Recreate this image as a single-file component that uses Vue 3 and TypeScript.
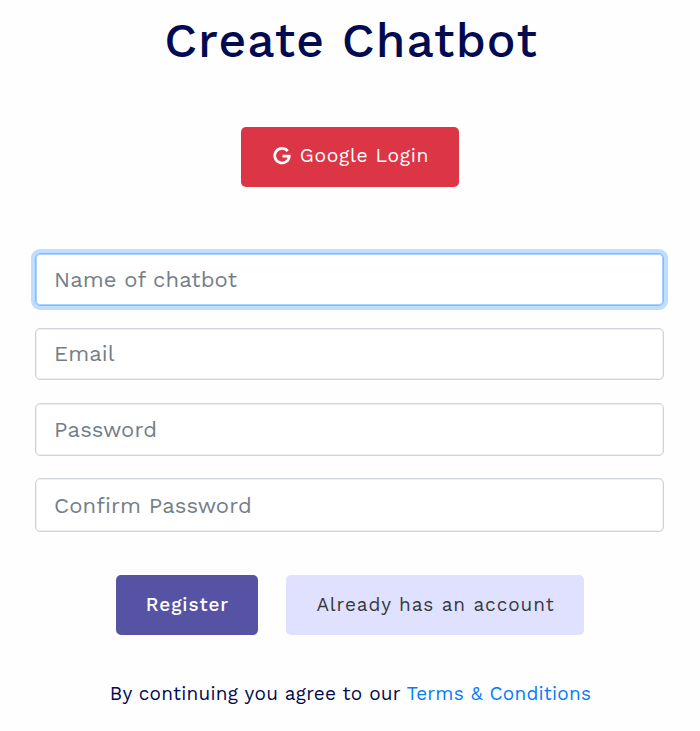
<script setup lang="ts">
import { ref } from 'vue'

interface Field {
  id: string
  label: string
  type: string
}

const fields: Field[] = [
  { id: 'name', label: 'Name of chatbot', type: 'text' },
  { id: 'email', label: 'Email', type: 'email' },
  { id: 'password', label: 'Password', type: 'password' },
  { id: 'confirm', label: 'Confirm Password', type: 'password' },
]

const values = ref<Record<string, string>>({ name: '', email: '', password: '', confirm: '' })
const active = ref('name')
</script>

<template>
  <main class="page">
    <h1 class="title">Create Chatbot</h1>
    <button class="btn google" type="button">
      <svg class="g-icon" viewBox="0 0 18 18" aria-hidden="true">
        <path d="M14.700 4.100A7.300 7.300 0 1 0 16.300 9.100H9.500" fill="none" stroke="currentColor" stroke-width="2.700" />
      </svg>
      <span>Google Login</span>
    </button>
    <form class="form" @submit.prevent>
      <input
        v-for="f in fields"
        :key="f.id"
        v-model="values[f.id]"
        class="field"
        :class="[f.id, { active: active === f.id }]"
        :type="f.type"
        :placeholder="f.label"
        @focus="active = f.id"
      />
      <div class="actions">
        <button class="btn register" type="submit">Register</button>
        <button class="btn account" type="button">Already has an account</button>
      </div>
    </form>
    <p class="terms">By continuing you agree to our <a href="#">Terms &amp; Conditions</a></p>
  </main>
</template>

<style>
body {
  background: #fefefe;
}
</style>

<style scoped>
* {
  box-sizing: border-box;
}
.page {
  height: 731px;
  display: flex;
  flex-direction: column;
  align-items: center;
  overflow: hidden;
  font-family: 'Work Sans', Inter, 'Liberation Sans', sans-serif;
  color: #020a51;
}
.title {
  margin: 12px 0 0;
  height: 56px;
  line-height: 57px;
  font-size: 48px;
  font-weight: 500;
  letter-spacing: 1.1px;
  padding-left: 2px;
  white-space: nowrap;
}
.btn {
  height: 60px;
  border: 0;
  border-radius: 5px;
  font: 500 19px 'Work Sans', Inter, sans-serif;
  letter-spacing: 0.92px;
  padding: 0 0 2px 1px;
  white-space: nowrap;
}
.google {
  width: 218px;
  margin-top: 59px;
  padding: 0 0 3px 2px;
  display: flex;
  align-items: center;
  justify-content: center;
  gap: 9px;
  color: #fff;
  background: #dc3545;
  font-size: 19.3px;
  font-weight: 450;
  letter-spacing: 0.7px;
}
.g-icon {
  width: 18px;
  height: 18px;
}
.form {
  width: 629px;
  margin: 66px 1px 0 0;
  display: flex;
  flex-direction: column;
}
.field {
  height: 53px;
  margin: 0 0 22px;
  padding: 0 18px;
  border: 1px solid #ced4da;
  border-radius: 5px;
  outline: 0;
  background: #fff;
  box-shadow: inset 0 0 0 1px #eef0f3;
  color: #495057;
  font: 400 22px 'Work Sans', Inter, sans-serif;
  letter-spacing: 0.13px;
}
.field::placeholder {
  color: #747e87;
  opacity: 1;
}
.email {
  height: 52px;
  margin-bottom: 23px;
  padding-bottom: 2px;
}
.confirm {
  height: 54px;
}
.active {
  border-color: #80bdff;
  box-shadow: 0 0 0 4px #bfdeff, inset 0 0 0 1px #a9d2ff;
}
.actions {
  display: flex;
  justify-content: center;
  gap: 28px;
  margin: 21px -1px 0 0;
}
.register {
  width: 142px;
  color: #fff;
  background: #5653a4;
}
.account {
  width: 298px;
  color: #343a40;
  background: #e0e0ff;
  font-weight: 400;
}
.terms {
  margin: 46px 0 0;
  padding-left: 1px;
  font-size: 19px;
  letter-spacing: 0.24px;
  line-height: 26px;
  white-space: nowrap;
}
.terms a {
  color: #007bff;
  text-decoration: none;
}
</style>
